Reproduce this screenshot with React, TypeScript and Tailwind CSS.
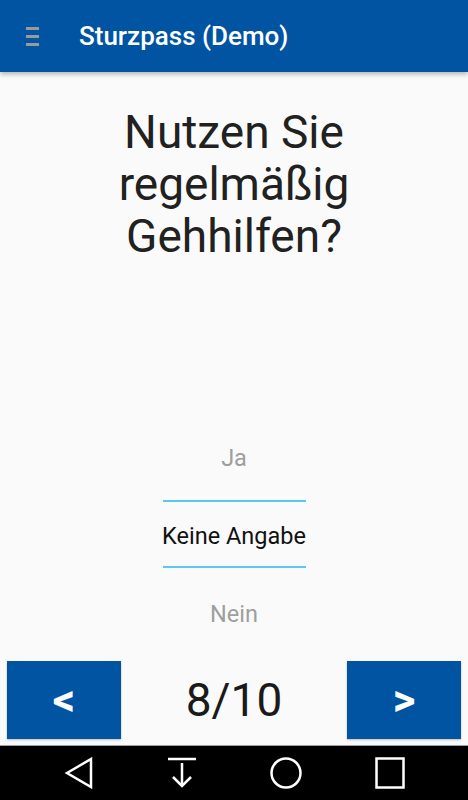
import { useState } from "react";

const options = ["Ja", "Keine Angabe", "Nein"];

function NavBar() {
  return (
    <div className="flex h-[55px] items-center justify-center gap-[73px] border-t border-[#9e9e9e] bg-black">
      <svg width="30" height="32" viewBox="0 0 30 32" fill="none" stroke="white" strokeWidth="2.5" strokeLinejoin="miter">
        <path d="M3 16 L27 2 L27 30 Z" />
      </svg>
      <svg width="30" height="32" viewBox="0 0 30 32" fill="none" stroke="white" strokeWidth="2.5">
        <path d="M1 2 H29" />
        <path d="M15 6 V29" />
        <path d="M6 20 L15 29 L24 20" />
      </svg>
      <svg width="32" height="32" viewBox="0 0 32 32" fill="none" stroke="white" strokeWidth="2.5">
        <circle cx="16" cy="16" r="14.5" />
      </svg>
      <svg width="30" height="32" viewBox="0 0 30 32" fill="none" stroke="white" strokeWidth="2.5">
        <rect x="1.5" y="1.5" width="27" height="29" />
      </svg>
    </div>
  );
}

export default function App() {
  const [selected] = useState(1);

  return (
    <div className="flex h-[800px] w-[468px] flex-col overflow-hidden bg-[#fafafa] font-['Roboto',sans-serif]">
      <header className="relative z-10 flex h-[72px] shrink-0 items-center bg-[#0154a1] shadow-[0_2px_5px_rgba(0,0,0,0.3)]">
        <div className="ml-[26px] flex w-[13px] flex-col gap-[5px]">
          <span className="h-[3px] bg-[#9a9a9a]" />
          <span className="h-[3px] bg-[#9a9a9a]" />
          <span className="h-[3px] bg-[#9a9a9a]" />
        </div>
        <h1 className="ml-[40px] text-[26px] font-medium text-white">Sturzpass (Demo)</h1>
      </header>

      <main className="flex flex-1 flex-col">
        <h2 className="mx-auto mt-[34px] w-[260px] text-center text-[46px] leading-[52px] font-normal text-[#212121]">
          Nutzen Sie regelmäßig Gehhilfen?
        </h2>

        <div className="mt-[184px] flex flex-col items-center">
          <div className="text-[23.5px] leading-[24px] text-[#9e9e9e]">{options[0]}</div>
          <div className="mt-[30px] h-[2px] w-[143px] bg-[#5ac8f2]" />
          <div className="mt-[22px] text-[23.5px] leading-[24px] text-[#111]">{options[selected]}</div>
          <div className="mt-[18px] h-[2px] w-[143px] bg-[#5ac8f2]" />
          <div className="mt-[34px] text-[23.5px] leading-[24px] text-[#9e9e9e]">{options[2]}</div>
        </div>

        <div className="mt-auto mb-[6px] flex items-center justify-between px-[7px]">
          <button className="flex h-[78px] w-[114px] items-center justify-center bg-[#0154a1] text-[44px] font-bold text-white shadow-[0_1px_2px_rgba(0,0,0,0.25)]">
            &lt;
          </button>
          <span className="text-[46px] text-[#1a1a1a]">8/10</span>
          <button className="flex h-[78px] w-[114px] items-center justify-center bg-[#0154a1] text-[44px] font-bold text-white shadow-[0_1px_2px_rgba(0,0,0,0.25)]">
            &gt;
          </button>
        </div>
      </main>

      <NavBar />
    </div>
  );
}
